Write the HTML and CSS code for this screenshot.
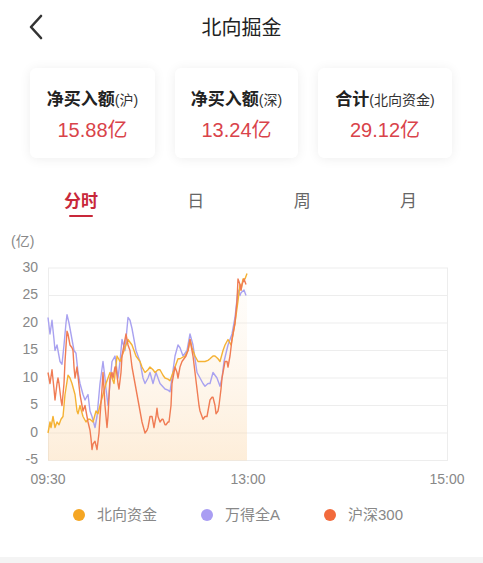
FILE: index.html
```html
<!DOCTYPE html>
<html lang="zh-CN">

<head>
    <meta charset="UTF-8">
    <meta name="viewport" content="width=device-width, initial-scale=1.0">
    <title>北向掘金</title>
    <link rel="stylesheet" href="styles.css">
</head>

<body>
    <div class="page">
        <header class="topbar">
            <button class="back-btn" aria-label="返回">
                <svg width="16" height="26" viewBox="0 0 16 26" fill="none" xmlns="http://www.w3.org/2000/svg">
                    <path d="M13 2L3 13L13 24" stroke="#333" stroke-width="2.6" stroke-linecap="round" stroke-linejoin="round" />
                </svg>
            </button>
            <h1>北向掘金</h1>
        </header>

        <!-- Summary cards -->
        <div class="cards">
            <div class="card">
                <div class="card-title">净买入额<span class="card-sub">(沪)</span></div>
                <div class="card-value">15.88亿</div>
            </div>
            <div class="card">
                <div class="card-title">净买入额<span class="card-sub">(深)</span></div>
                <div class="card-value">13.24亿</div>
            </div>
            <div class="card">
                <div class="card-title">合计<span class="card-sub">(北向资金)</span></div>
                <div class="card-value">29.12亿</div>
            </div>
        </div>

        <div class="tabs">
            <div class="tab active">分时</div>
            <div class="tab">日</div>
            <div class="tab">周</div>
            <div class="tab">月</div>
        </div>

        <div class="unit">(亿)</div>

        <div class="chart">
            <svg width="483" height="244" viewBox="0 251 483 244" xmlns="http://www.w3.org/2000/svg">
                <defs>
                    <linearGradient id="areaFill" x1="0" y1="0" x2="0" y2="1">
                        <stop offset="0" stop-color="#fbd3a0" stop-opacity="0.4" />
                        <stop offset="1" stop-color="#fdecd6" stop-opacity="0.08" />
                    </linearGradient>
                </defs>

                <!-- grid -->
                <g class="grid">
                    <line x1="48" y1="268" x2="448" y2="268" />
                    <line x1="48" y1="295.5" x2="448" y2="295.5" />
                    <line x1="48" y1="323" x2="448" y2="323" />
                    <line x1="48" y1="350.5" x2="448" y2="350.5" />
                    <line x1="48" y1="378" x2="448" y2="378" />
                    <line x1="48" y1="405.5" x2="448" y2="405.5" />
                    <line x1="48" y1="433" x2="448" y2="433" />
                    <line x1="48" y1="460.5" x2="448" y2="460.5" />
                    <line x1="48.5" y1="268" x2="48.5" y2="461" />
                    <line x1="447.5" y1="268" x2="447.5" y2="461" />
                </g>

                <g class="axis-y">
                    <text x="38" y="268">30</text>
                    <text x="38" y="295.5">25</text>
                    <text x="38" y="323">20</text>
                    <text x="38" y="350.5">15</text>
                    <text x="38" y="378">10</text>
                    <text x="38" y="405.5">5</text>
                    <text x="38" y="433">0</text>
                    <text x="38" y="460.5">-5</text>
                </g>

                <g class="axis-x">
                    <text x="48" y="484">09:30</text>
                    <text x="248" y="484">13:00</text>
                    <text x="447" y="484">15:00</text>
                </g>

                <!-- series: x in px, y in 亿 -->
                <g transform="translate(0,433) scale(1,-5.5)">
                    <polygon fill="url(#areaFill)" points="48,0 50,2 51,1 53,3 55,1 57,2 59,1.5 61,2.5 63,3 65,7 68,10.5 70,10 72,9 75,7 77,4 78,3.5 80,5 83,3 86,2 88,2.5 90,2.5 93,2 96,4 98,3.5 100,5 103,7 106,9 108,10 110,11 112,10 114,9 117,14 120,13 124,15 128,17 132,16 136,14 140,13 142,12 145,11 148,11.5 150,12 153,11.5 155,11 158,11.5 160,11.5 163,10.5 165,10 168,9.8 170,9.5 173,11 175,12 178,13.5 180,13.5 185,14 188,15 190,17 192,15.5 195,14 198,13 200,13 205,13 208,13.2 210,13.5 213,14 215,14 218,13.5 220,13 223,15 225,16 228,17 231,16 233,18 235,20 238,24 240,27 241,26 243,28 245,28 247,29 247,-5 48,-5" />
                    <polyline class="line line-blue" points="48,21 50,18 52,20.5 54,17 55,15 57,16 60,13 62,12.5 64,16 66,20 67,21.5 69,20 72,17 74,15 76,14.5 78,11 80,9 83,7 85,6 88,7 90,4 92,3 95,1 97,3 100,9 103,13 105,10 106,8 108,5 110,9 112,13 115,14 118,10 120,13 122,17 125,15 128,21 130,20.5 132,19 136,15 140,13 143,10 145,9 148,10 150,11 153,9 156,11 158,10 160,9 165,8 168,7.8 170,7.5 172,10 175,14 178,16 180,15.5 183,14 187,15 190,18 193,16 197,11 200,10 203,9 205,8.5 208,9 210,9 213,11 217,10 220,8.5 222,10 224,13 228,16 232,18 235,21 238,26 240,25 241,25.5 244,26 246,25" />
                    <polyline class="line line-yellow" points="48,0 50,2 51,1 53,3 55,1 57,2 59,1.5 61,2.5 63,3 65,7 68,10.5 70,10 72,9 75,7 77,4 78,3.5 80,5 83,3 86,2 88,2.5 90,2.5 93,2 96,4 98,3.5 100,5 103,7 106,9 108,10 110,11 112,10 114,9 117,14 120,13 124,15 128,17 132,16 136,14 140,13 142,12 145,11 148,11.5 150,12 153,11.5 155,11 158,11.5 160,11.5 163,10.5 165,10 168,9.8 170,9.5 173,11 175,12 178,13.5 180,13.5 185,14 188,15 190,17 192,15.5 195,14 198,13 200,13 205,13 208,13.2 210,13.5 213,14 215,14 218,13.5 220,13 223,15 225,16 228,17 231,16 233,18 235,20 238,24 240,27 241,26 243,28 245,28 247,29" />
                    <polyline class="line line-red" points="48,11 49,10 50,9 52,11.5 54,8 55,6 57,9 58,10 59,9 61,6 62,5 64,9 65,13 67,18.5 68,18 70,16 72,15.5 73,15 74,12 75,10 77,12 80,7 82,5 83,4 85,5 87,3 88,2 90,0.5 91,-1 92,-3 93,-2 95,-1.5 97,-3 99,0 100,3 102,8 103,11 104,8 105,5 107,1 108,3 110,10 112,11 113,10 115,12 116,12 118,9 119,8 121,11 122,14 124,16 126,18 128,16 130,15 132,12 133,11 135,9 136,8 138,6 140,4 142,2 145,0 147,0.5 148,1 150,3 152,3 153,2 154,1 156,3 157,4.5 158,3 160,2 162,2.5 163,2.5 165,1.5 166,1.5 168,2 169,2 171,5 172,9 174,11 175,12 177,11 178,10 180,12 182,13 184,13.5 186,14 188,15 190,17 192,15 193,14 195,11 197,8 199,5 200,4 202,3 203,2.5 205,3 207,3 209,5 210,6 212,6.5 213,6.5 215,5 216,3.5 218,4 219,5 221,8 222,10 224,12 225,13 227,13 228,12 230,14 232,17 234,19 235,20 237,24 238,28 240,27 241,26 242,27 244,28 246,27" />
                </g>
            </svg>
        </div>

        <div class="legend">
            <div class="legend-item"><span class="dot dot-yellow"></span>北向资金</div>
            <div class="legend-item"><span class="dot dot-blue"></span>万得全A</div>
            <div class="legend-item"><span class="dot dot-red"></span>沪深300</div>
        </div>

        <div class="footer-band"></div>
    </div>
</body>

</html>
```

FILE: styles.css
```css
* {
    margin: 0;
    padding: 0;
    box-sizing: border-box;
    font-family: 'Liberation Sans', 'Noto Sans CJK SC', sans-serif;
}

body {
    background-color: #fff;
    color: #333;
}

.page {
    width: 483px;
    height: 563px;
    overflow: hidden;
}

/* Top bar */
.topbar {
    position: relative;
    height: 56px;
    display: flex;
    align-items: center;
    justify-content: center;
}

.topbar h1 {
    font-size: 20px;
    font-weight: 400;
    line-height: 28px;
    color: #222;
}

.back-btn {
    position: absolute;
    left: 28px;
    top: 14px;
    background: none;
    border: none;
    display: flex;
}

/* Summary cards */
.cards {
    display: grid;
    grid-template-columns: 125px 123px 134px;
    column-gap: 20px;
    padding: 0 30px;
    margin-top: 12px;
}

.card {
    background-color: #fff;
    border-radius: 6px;
    box-shadow: 0 1px 12px rgba(0, 0, 0, 0.07);
    height: 90px;
    padding-top: 20px;
    text-align: center;
}

.card-title {
    font-size: 17px;
    font-weight: 700;
    line-height: 24px;
    color: #222;
    white-space: nowrap;
}

.card-sub {
    font-size: 14px;
    font-weight: 400;
    color: #333;
}

.card-value {
    margin-top: 6px;
    font-size: 20px;
    line-height: 24px;
    color: #d9434a;
}

/* Tabs */
.tabs {
    display: flex;
    justify-content: space-between;
    align-items: flex-start;
    padding: 0 66px 0 64px;
    margin-top: 32px;
}

.tab {
    font-size: 17px;
    line-height: 24px;
    color: #666;
}

.tab.active {
    color: #c8283a;
    font-weight: 700;
}

.tab.active::after {
    content: "";
    display: block;
    width: 24px;
    height: 2px;
    margin: 1px auto 0;
    background-color: #c8283a;
    border-radius: 1px;
}

.unit {
    margin-top: 14px;
    padding-left: 11px;
    font-size: 14px;
    line-height: 20px;
    color: #888;
}

/* Chart */
.chart svg {
    display: block;
}

.grid line {
    stroke: #ededed;
    stroke-width: 1;
}

.axis-y text {
    font-size: 14px;
    fill: #888;
    text-anchor: end;
    dominant-baseline: middle;
}

.axis-x text {
    font-size: 14px;
    fill: #888;
    text-anchor: middle;
}

.line {
    fill: none;
    stroke-width: 1.4;
    stroke-linejoin: round;
    vector-effect: non-scaling-stroke;
}

.line-yellow {
    stroke: #f5b234;
}

.line-blue {
    stroke: #a9a2f0;
}

.line-red {
    stroke: #f07c54;
}

/* Legend */
.legend {
    display: flex;
    justify-content: center;
    gap: 44px;
    margin-top: 10px;
    padding-right: 7px;
}

.legend-item {
    display: flex;
    align-items: center;
    gap: 12px;
    font-size: 15px;
    line-height: 20px;
    color: #888;
}

.dot {
    width: 12px;
    height: 12px;
    border-radius: 50%;
}

.dot-yellow {
    background-color: #f5a623;
}

.dot-blue {
    background-color: #a99df3;
}

.dot-red {
    background-color: #f26a3c;
}

.footer-band {
    margin-top: 32px;
    height: 10px;
    background-color: #f4f4f4;
}
```
